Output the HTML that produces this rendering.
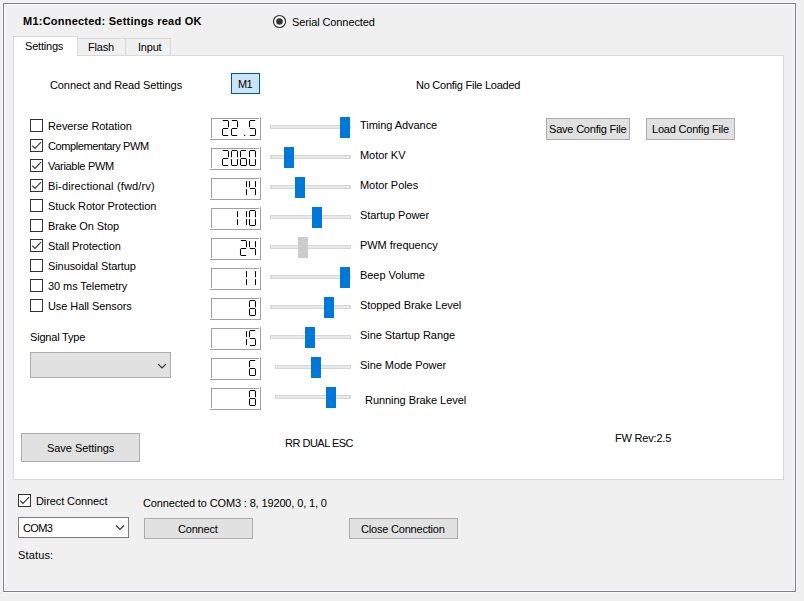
<!DOCTYPE html>
<html><head><meta charset="utf-8"><style>
html,body{margin:0;padding:0;}
body{width:804px;height:601px;overflow:hidden;background:#f0f0f0;position:relative;font-family:'Liberation Sans',sans-serif;}
.t{position:absolute;font-size:11px;line-height:13px;white-space:pre;color:#000;font-family:'Liberation Sans',sans-serif;}
</style></head><body>
<div style="position:absolute;left:2px;top:2px;width:795px;height:591px;box-sizing:border-box;border:1px solid #f8f8f8;"></div><div style="position:absolute;left:3px;top:3px;width:793px;height:589px;box-sizing:border-box;border:1px solid #7d8189;"></div><div style="position:absolute;left:4px;top:4px;width:791px;height:587px;box-sizing:border-box;border:1px solid #fbfbfb;"></div><div class="t" style="left:23px;top:15px;font-weight:bold;letter-spacing:0.23px;">M1:Connected: Settings read OK</div><svg style="position:absolute;left:272px;top:14px" width="16" height="16"><circle cx="7.5" cy="7.5" r="6" fill="#fff" stroke="#333" stroke-width="1.2"/><circle cx="7.5" cy="7.5" r="3.3" fill="#333"/></svg><div class="t" style="left:292px;top:16px;letter-spacing:-0.1px;">Serial Connected</div><div style="position:absolute;left:77px;top:38px;width:49px;height:18px;box-sizing:border-box;background:#f0f0f0;border:1px solid #d9d9d9;"></div><div style="position:absolute;left:125px;top:38px;width:46px;height:18px;box-sizing:border-box;background:#f0f0f0;border:1px solid #d9d9d9;"></div><div style="position:absolute;left:13px;top:55px;width:771px;height:425px;box-sizing:border-box;background:#fff;border:1px solid #d9d9d9;"></div><div style="position:absolute;left:13px;top:36px;width:65px;height:20px;box-sizing:border-box;background:#fff;border:1px solid #d9d9d9;border-bottom:none;"></div><div style="position:absolute;left:14px;top:55px;width:63px;height:1px;box-sizing:border-box;background:#fff;"></div><div class="t" style="left:25px;top:40px;letter-spacing:-0.2px;">Settings</div><div class="t" style="left:88px;top:41px;letter-spacing:-0.2px;">Flash</div><div class="t" style="left:138px;top:41px;letter-spacing:-0.2px;">Input</div><div class="t" style="left:50px;top:79px;letter-spacing:-0.1px;">Connect and Read Settings</div><div style="position:absolute;left:231px;top:73px;width:29px;height:21px;box-sizing:border-box;background:#cce4f7;border:1px solid #005499;"></div><div class="t" style="left:238px;top:78px;letter-spacing:-0.6px;">M1</div><div class="t" style="left:416px;top:79px;letter-spacing:-0.25px;">No Config File Loaded</div><svg style="position:absolute;left:30px;top:119px" width="13" height="13"><rect x="0.5" y="0.5" width="12" height="12" fill="#fff" stroke="#333"/></svg><div class="t" style="left:48px;top:120px;letter-spacing:-0.08px;">Reverse Rotation</div><svg style="position:absolute;left:30px;top:139px" width="13" height="13"><rect x="0.5" y="0.5" width="12" height="12" fill="#fff" stroke="#333"/><polyline points="2.2,6.6 5,9.4 11,3.2" fill="none" stroke="#333" stroke-width="1.1"/></svg><div class="t" style="left:48px;top:140px;letter-spacing:-0.4px;">Complementary PWM</div><svg style="position:absolute;left:30px;top:159px" width="13" height="13"><rect x="0.5" y="0.5" width="12" height="12" fill="#fff" stroke="#333"/><polyline points="2.2,6.6 5,9.4 11,3.2" fill="none" stroke="#333" stroke-width="1.1"/></svg><div class="t" style="left:48px;top:160px;letter-spacing:-0.3px;">Variable PWM</div><svg style="position:absolute;left:30px;top:179px" width="13" height="13"><rect x="0.5" y="0.5" width="12" height="12" fill="#fff" stroke="#333"/><polyline points="2.2,6.6 5,9.4 11,3.2" fill="none" stroke="#333" stroke-width="1.1"/></svg><div class="t" style="left:48px;top:180px;letter-spacing:0.15px;">Bi-directional (fwd/rv)</div><svg style="position:absolute;left:30px;top:199px" width="13" height="13"><rect x="0.5" y="0.5" width="12" height="12" fill="#fff" stroke="#333"/></svg><div class="t" style="left:48px;top:200px;letter-spacing:-0.08px;">Stuck Rotor Protection</div><svg style="position:absolute;left:30px;top:219px" width="13" height="13"><rect x="0.5" y="0.5" width="12" height="12" fill="#fff" stroke="#333"/></svg><div class="t" style="left:48px;top:220px;letter-spacing:-0.08px;">Brake On Stop</div><svg style="position:absolute;left:30px;top:239px" width="13" height="13"><rect x="0.5" y="0.5" width="12" height="12" fill="#fff" stroke="#333"/><polyline points="2.2,6.6 5,9.4 11,3.2" fill="none" stroke="#333" stroke-width="1.1"/></svg><div class="t" style="left:48px;top:240px;letter-spacing:-0.08px;">Stall Protection</div><svg style="position:absolute;left:30px;top:259px" width="13" height="13"><rect x="0.5" y="0.5" width="12" height="12" fill="#fff" stroke="#333"/></svg><div class="t" style="left:48px;top:260px;letter-spacing:-0.08px;">Sinusoidal Startup</div><svg style="position:absolute;left:30px;top:279px" width="13" height="13"><rect x="0.5" y="0.5" width="12" height="12" fill="#fff" stroke="#333"/></svg><div class="t" style="left:48px;top:280px;letter-spacing:-0.08px;">30 ms Telemetry</div><svg style="position:absolute;left:30px;top:299px" width="13" height="13"><rect x="0.5" y="0.5" width="12" height="12" fill="#fff" stroke="#333"/></svg><div class="t" style="left:48px;top:300px;letter-spacing:-0.08px;">Use Hall Sensors</div><svg style="position:absolute;left:209px;top:116px" width="54" height="25"><g fill="#a0a0a0"><rect x="2" y="2" width="48" height="1"/><rect x="2" y="2" width="1" height="20"/><rect x="1" y="23" width="51" height="1"/><rect x="51" y="1" width="1" height="23"/></g><g stroke="#000" stroke-width="1.05" stroke-linecap="round" fill="#000"><line x1="41.2" y1="4.5" x2="45.8" y2="4.5"/><line x1="41.2" y1="12.5" x2="45.8" y2="12.5"/><line x1="41.2" y1="19.5" x2="45.8" y2="19.5"/><line x1="40.5" y1="5.4" x2="40.5" y2="10.8"/><line x1="46.5" y1="13.4" x2="46.5" y2="18.6"/><rect x="35" y="19" width="1.2" height="1.1" fill="#000" stroke="none"/><line x1="23.2" y1="4.5" x2="27.8" y2="4.5"/><line x1="23.2" y1="12.5" x2="27.8" y2="12.5"/><line x1="23.2" y1="19.5" x2="27.8" y2="19.5"/><line x1="28.5" y1="5.4" x2="28.5" y2="10.8"/><line x1="22.5" y1="13.4" x2="22.5" y2="18.6"/><line x1="14.2" y1="4.5" x2="18.8" y2="4.5"/><line x1="14.2" y1="12.5" x2="18.8" y2="12.5"/><line x1="14.2" y1="19.5" x2="18.8" y2="19.5"/><line x1="19.5" y1="5.4" x2="19.5" y2="10.8"/><line x1="13.5" y1="13.4" x2="13.5" y2="18.6"/></g></svg><svg style="position:absolute;left:209px;top:146px" width="54" height="25"><g fill="#a0a0a0"><rect x="2" y="2" width="48" height="1"/><rect x="2" y="2" width="1" height="20"/><rect x="1" y="23" width="51" height="1"/><rect x="51" y="1" width="1" height="23"/></g><g stroke="#000" stroke-width="1.05" stroke-linecap="round" fill="#000"><line x1="41.2" y1="4.5" x2="45.8" y2="4.5"/><line x1="41.2" y1="19.5" x2="45.8" y2="19.5"/><line x1="40.5" y1="5.4" x2="40.5" y2="10.8"/><line x1="46.5" y1="5.4" x2="46.5" y2="10.8"/><line x1="40.5" y1="13.4" x2="40.5" y2="18.6"/><line x1="46.5" y1="13.4" x2="46.5" y2="18.6"/><line x1="32.2" y1="4.5" x2="36.8" y2="4.5"/><line x1="32.2" y1="12.5" x2="36.8" y2="12.5"/><line x1="32.2" y1="19.5" x2="36.8" y2="19.5"/><line x1="31.5" y1="5.4" x2="31.5" y2="10.8"/><line x1="31.5" y1="13.4" x2="31.5" y2="18.6"/><line x1="37.5" y1="13.4" x2="37.5" y2="18.6"/><line x1="23.2" y1="4.5" x2="27.8" y2="4.5"/><line x1="23.2" y1="19.5" x2="27.8" y2="19.5"/><line x1="22.5" y1="5.4" x2="22.5" y2="10.8"/><line x1="28.5" y1="5.4" x2="28.5" y2="10.8"/><line x1="22.5" y1="13.4" x2="22.5" y2="18.6"/><line x1="28.5" y1="13.4" x2="28.5" y2="18.6"/><line x1="14.2" y1="4.5" x2="18.8" y2="4.5"/><line x1="14.2" y1="12.5" x2="18.8" y2="12.5"/><line x1="14.2" y1="19.5" x2="18.8" y2="19.5"/><line x1="19.5" y1="5.4" x2="19.5" y2="10.8"/><line x1="13.5" y1="13.4" x2="13.5" y2="18.6"/></g></svg><svg style="position:absolute;left:209px;top:176px" width="54" height="25"><g fill="#a0a0a0"><rect x="2" y="2" width="48" height="1"/><rect x="2" y="2" width="1" height="20"/><rect x="1" y="23" width="51" height="1"/><rect x="51" y="1" width="1" height="23"/></g><g stroke="#000" stroke-width="1.05" stroke-linecap="round" fill="#000"><line x1="41.2" y1="12.5" x2="45.8" y2="12.5"/><line x1="40.5" y1="5.4" x2="40.5" y2="10.8"/><line x1="46.5" y1="5.4" x2="46.5" y2="10.8"/><line x1="46.5" y1="13.4" x2="46.5" y2="18.6"/><line x1="37.5" y1="5.4" x2="37.5" y2="10.8"/><line x1="37.5" y1="13.4" x2="37.5" y2="18.6"/></g></svg><svg style="position:absolute;left:209px;top:206px" width="54" height="25"><g fill="#a0a0a0"><rect x="2" y="2" width="48" height="1"/><rect x="2" y="2" width="1" height="20"/><rect x="1" y="23" width="51" height="1"/><rect x="51" y="1" width="1" height="23"/></g><g stroke="#000" stroke-width="1.05" stroke-linecap="round" fill="#000"><line x1="41.2" y1="4.5" x2="45.8" y2="4.5"/><line x1="41.2" y1="19.5" x2="45.8" y2="19.5"/><line x1="40.5" y1="5.4" x2="40.5" y2="10.8"/><line x1="46.5" y1="5.4" x2="46.5" y2="10.8"/><line x1="40.5" y1="13.4" x2="40.5" y2="18.6"/><line x1="46.5" y1="13.4" x2="46.5" y2="18.6"/><line x1="37.5" y1="5.4" x2="37.5" y2="10.8"/><line x1="37.5" y1="13.4" x2="37.5" y2="18.6"/><line x1="28.5" y1="5.4" x2="28.5" y2="10.8"/><line x1="28.5" y1="13.4" x2="28.5" y2="18.6"/></g></svg><svg style="position:absolute;left:209px;top:236px" width="54" height="25"><g fill="#a0a0a0"><rect x="2" y="2" width="48" height="1"/><rect x="2" y="2" width="1" height="20"/><rect x="1" y="23" width="51" height="1"/><rect x="51" y="1" width="1" height="23"/></g><g stroke="#000" stroke-width="1.05" stroke-linecap="round" fill="#000"><line x1="41.2" y1="12.5" x2="45.8" y2="12.5"/><line x1="40.5" y1="5.4" x2="40.5" y2="10.8"/><line x1="46.5" y1="5.4" x2="46.5" y2="10.8"/><line x1="46.5" y1="13.4" x2="46.5" y2="18.6"/><line x1="32.2" y1="4.5" x2="36.8" y2="4.5"/><line x1="32.2" y1="12.5" x2="36.8" y2="12.5"/><line x1="32.2" y1="19.5" x2="36.8" y2="19.5"/><line x1="37.5" y1="5.4" x2="37.5" y2="10.8"/><line x1="31.5" y1="13.4" x2="31.5" y2="18.6"/></g></svg><svg style="position:absolute;left:209px;top:266px" width="54" height="25"><g fill="#a0a0a0"><rect x="2" y="2" width="48" height="1"/><rect x="2" y="2" width="1" height="20"/><rect x="1" y="23" width="51" height="1"/><rect x="51" y="1" width="1" height="23"/></g><g stroke="#000" stroke-width="1.05" stroke-linecap="round" fill="#000"><line x1="46.5" y1="5.4" x2="46.5" y2="10.8"/><line x1="46.5" y1="13.4" x2="46.5" y2="18.6"/><line x1="37.5" y1="5.4" x2="37.5" y2="10.8"/><line x1="37.5" y1="13.4" x2="37.5" y2="18.6"/></g></svg><svg style="position:absolute;left:209px;top:296px" width="54" height="25"><g fill="#a0a0a0"><rect x="2" y="2" width="48" height="1"/><rect x="2" y="2" width="1" height="20"/><rect x="1" y="23" width="51" height="1"/><rect x="51" y="1" width="1" height="23"/></g><g stroke="#000" stroke-width="1.05" stroke-linecap="round" fill="#000"><line x1="41.2" y1="4.5" x2="45.8" y2="4.5"/><line x1="41.2" y1="12.5" x2="45.8" y2="12.5"/><line x1="41.2" y1="19.5" x2="45.8" y2="19.5"/><line x1="40.5" y1="5.4" x2="40.5" y2="10.8"/><line x1="46.5" y1="5.4" x2="46.5" y2="10.8"/><line x1="40.5" y1="13.4" x2="40.5" y2="18.6"/><line x1="46.5" y1="13.4" x2="46.5" y2="18.6"/></g></svg><svg style="position:absolute;left:209px;top:326px" width="54" height="25"><g fill="#a0a0a0"><rect x="2" y="2" width="48" height="1"/><rect x="2" y="2" width="1" height="20"/><rect x="1" y="23" width="51" height="1"/><rect x="51" y="1" width="1" height="23"/></g><g stroke="#000" stroke-width="1.05" stroke-linecap="round" fill="#000"><line x1="41.2" y1="4.5" x2="45.8" y2="4.5"/><line x1="41.2" y1="12.5" x2="45.8" y2="12.5"/><line x1="41.2" y1="19.5" x2="45.8" y2="19.5"/><line x1="40.5" y1="5.4" x2="40.5" y2="10.8"/><line x1="46.5" y1="13.4" x2="46.5" y2="18.6"/><line x1="37.5" y1="5.4" x2="37.5" y2="10.8"/><line x1="37.5" y1="13.4" x2="37.5" y2="18.6"/></g></svg><svg style="position:absolute;left:209px;top:356px" width="54" height="25"><g fill="#a0a0a0"><rect x="2" y="2" width="48" height="1"/><rect x="2" y="2" width="1" height="20"/><rect x="1" y="23" width="51" height="1"/><rect x="51" y="1" width="1" height="23"/></g><g stroke="#000" stroke-width="1.05" stroke-linecap="round" fill="#000"><line x1="41.2" y1="4.5" x2="45.8" y2="4.5"/><line x1="41.2" y1="12.5" x2="45.8" y2="12.5"/><line x1="41.2" y1="19.5" x2="45.8" y2="19.5"/><line x1="40.5" y1="5.4" x2="40.5" y2="10.8"/><line x1="40.5" y1="13.4" x2="40.5" y2="18.6"/><line x1="46.5" y1="13.4" x2="46.5" y2="18.6"/></g></svg><svg style="position:absolute;left:209px;top:386px" width="54" height="25"><g fill="#a0a0a0"><rect x="2" y="2" width="48" height="1"/><rect x="2" y="2" width="1" height="20"/><rect x="1" y="23" width="51" height="1"/><rect x="51" y="1" width="1" height="23"/></g><g stroke="#000" stroke-width="1.05" stroke-linecap="round" fill="#000"><line x1="41.2" y1="4.5" x2="45.8" y2="4.5"/><line x1="41.2" y1="12.5" x2="45.8" y2="12.5"/><line x1="41.2" y1="19.5" x2="45.8" y2="19.5"/><line x1="40.5" y1="5.4" x2="40.5" y2="10.8"/><line x1="46.5" y1="5.4" x2="46.5" y2="10.8"/><line x1="40.5" y1="13.4" x2="40.5" y2="18.6"/><line x1="46.5" y1="13.4" x2="46.5" y2="18.6"/></g></svg><div style="position:absolute;left:270px;top:125px;width:81px;height:4px;box-sizing:border-box;background:#e7eaea;border:1px solid #d6d6d6;"></div><div style="position:absolute;left:340px;top:117px;width:10px;height:21px;box-sizing:border-box;background:#0078d7;"></div><div style="position:absolute;left:270px;top:155px;width:81px;height:4px;box-sizing:border-box;background:#e7eaea;border:1px solid #d6d6d6;"></div><div style="position:absolute;left:284px;top:147px;width:10px;height:21px;box-sizing:border-box;background:#0078d7;"></div><div style="position:absolute;left:270px;top:185px;width:81px;height:4px;box-sizing:border-box;background:#e7eaea;border:1px solid #d6d6d6;"></div><div style="position:absolute;left:295px;top:177px;width:10px;height:21px;box-sizing:border-box;background:#0078d7;"></div><div style="position:absolute;left:270px;top:215px;width:81px;height:4px;box-sizing:border-box;background:#e7eaea;border:1px solid #d6d6d6;"></div><div style="position:absolute;left:312px;top:207px;width:10px;height:21px;box-sizing:border-box;background:#0078d7;"></div><div style="position:absolute;left:270px;top:245px;width:81px;height:4px;box-sizing:border-box;background:#e7eaea;border:1px solid #d6d6d6;"></div><div style="position:absolute;left:298px;top:237px;width:10px;height:21px;box-sizing:border-box;background:#cccccc;"></div><div style="position:absolute;left:270px;top:275px;width:81px;height:4px;box-sizing:border-box;background:#e7eaea;border:1px solid #d6d6d6;"></div><div style="position:absolute;left:340px;top:267px;width:10px;height:21px;box-sizing:border-box;background:#0078d7;"></div><div style="position:absolute;left:270px;top:305px;width:81px;height:4px;box-sizing:border-box;background:#e7eaea;border:1px solid #d6d6d6;"></div><div style="position:absolute;left:324px;top:297px;width:10px;height:21px;box-sizing:border-box;background:#0078d7;"></div><div style="position:absolute;left:270px;top:335px;width:81px;height:4px;box-sizing:border-box;background:#e7eaea;border:1px solid #d6d6d6;"></div><div style="position:absolute;left:305px;top:327px;width:10px;height:21px;box-sizing:border-box;background:#0078d7;"></div><div style="position:absolute;left:275px;top:365px;width:76px;height:4px;box-sizing:border-box;background:#e7eaea;border:1px solid #d6d6d6;"></div><div style="position:absolute;left:311px;top:357px;width:10px;height:21px;box-sizing:border-box;background:#0078d7;"></div><div style="position:absolute;left:275px;top:395px;width:76px;height:4px;box-sizing:border-box;background:#e7eaea;border:1px solid #d6d6d6;"></div><div style="position:absolute;left:326px;top:387px;width:10px;height:21px;box-sizing:border-box;background:#0078d7;"></div><div class="t" style="left:360px;top:119px;letter-spacing:-0.05px;">Timing Advance</div><div class="t" style="left:360px;top:149px;letter-spacing:-0.05px;">Motor KV</div><div class="t" style="left:360px;top:179px;letter-spacing:-0.05px;">Motor Poles</div><div class="t" style="left:360px;top:209px;letter-spacing:-0.05px;">Startup Power</div><div class="t" style="left:360px;top:239px;letter-spacing:-0.05px;">PWM frequency</div><div class="t" style="left:360px;top:269px;letter-spacing:-0.05px;">Beep Volume</div><div class="t" style="left:360px;top:299px;letter-spacing:-0.05px;">Stopped Brake Level</div><div class="t" style="left:360px;top:329px;letter-spacing:-0.05px;">Sine Startup Range</div><div class="t" style="left:360px;top:359px;letter-spacing:-0.05px;">Sine Mode Power</div><div class="t" style="left:365px;top:394px;letter-spacing:-0.05px;">Running Brake Level</div><div style="position:absolute;left:546px;top:118px;width:84px;height:22px;box-sizing:border-box;background:#e1e1e1;border:1px solid #adadad;"></div><div class="t" style="left:549px;top:123px;letter-spacing:-0.2px;">Save Config File</div><div style="position:absolute;left:646px;top:118px;width:89px;height:22px;box-sizing:border-box;background:#e1e1e1;border:1px solid #adadad;"></div><div class="t" style="left:652px;top:123px;letter-spacing:-0.2px;">Load Config File</div><div class="t" style="left:30px;top:331px;letter-spacing:-0.2px;">Signal Type</div><div style="position:absolute;left:30px;top:352px;width:141px;height:26px;box-sizing:border-box;background:#e1e1e1;border:1px solid #adadad;"></div><svg style="position:absolute;left:156px;top:362px" width="12" height="8"><polyline points="2,2 6,6 10,2" fill="none" stroke="#333" stroke-width="1.1"/></svg><div style="position:absolute;left:21px;top:433px;width:119px;height:29px;box-sizing:border-box;background:#e1e1e1;border:1px solid #adadad;"></div><div class="t" style="left:47px;top:442px;letter-spacing:-0.05px;">Save Settings</div><div class="t" style="left:285px;top:437px;letter-spacing:-0.5px;">RR DUAL ESC</div><div class="t" style="left:615px;top:432px;letter-spacing:-0.2px;">FW Rev:2.5</div><svg style="position:absolute;left:18px;top:494px" width="13" height="13"><rect x="0.5" y="0.5" width="12" height="12" fill="#fff" stroke="#333"/><polyline points="2.2,6.6 5,9.4 11,3.2" fill="none" stroke="#333" stroke-width="1.1"/></svg><div class="t" style="left:36px;top:495px;letter-spacing:-0.1px;">Direct Connect</div><div class="t" style="left:143px;top:497px;letter-spacing:-0.14px;">Connected to COM3 : 8, 19200, 0, 1, 0</div><div style="position:absolute;left:18px;top:517px;width:111px;height:21px;box-sizing:border-box;background:#fff;border:1px solid #7a7a7a;"></div><div class="t" style="left:23px;top:522px;letter-spacing:-0.6px;">COM3</div><svg style="position:absolute;left:114px;top:523px" width="12" height="9"><polyline points="2,2.5 6,6.5 10,2.5" fill="none" stroke="#333" stroke-width="1.1"/></svg><div style="position:absolute;left:144px;top:518px;width:109px;height:21px;box-sizing:border-box;background:#e1e1e1;border:1px solid #adadad;"></div><div class="t" style="left:178px;top:523px;letter-spacing:-0.2px;">Connect</div><div style="position:absolute;left:349px;top:518px;width:109px;height:21px;box-sizing:border-box;background:#e1e1e1;border:1px solid #adadad;"></div><div class="t" style="left:361px;top:523px;letter-spacing:-0.2px;">Close Connection</div><div class="t" style="left:18px;top:549px;letter-spacing:0.15px;">Status:</div>
</body></html>
